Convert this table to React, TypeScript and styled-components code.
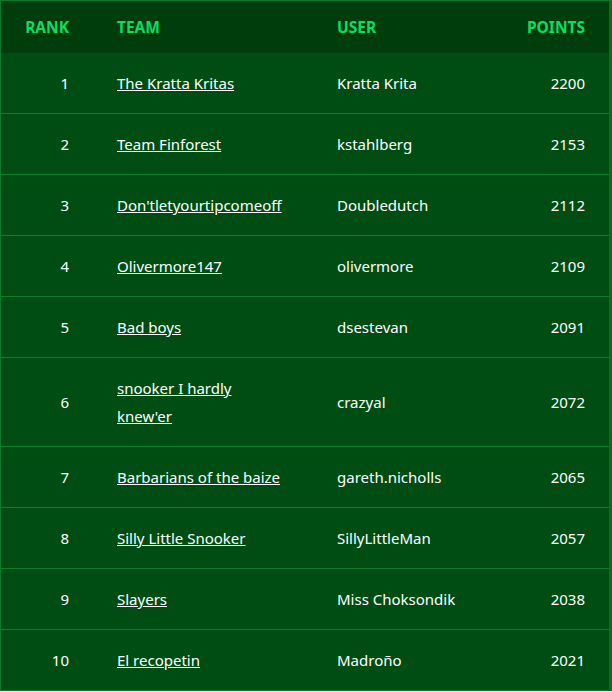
import React from "react";
import styled, { createGlobalStyle } from "styled-components";

const Global = createGlobalStyle`
  html, body { margin: 0; padding: 0; background: #ffffff; }
  body { font-family: "Noto Sans", "Open Sans", sans-serif; }
`;

const Frame = styled.div`
  width: 611px;
  border-top: 1px solid #0b7a2a;
  border-left: 1px solid #0b7a2a;
  background: #096d1f;
  overflow: hidden;
`;

const Table = styled.table`
  width: 608px;
  border-collapse: collapse;
  table-layout: fixed;
  font-size: 15px;
  line-height: 28px;
  color: #ffffff;
`;

const HeadRow = styled.tr`
  background: #003d0c;
`;

const Th = styled.th<{ $align?: "left" | "right" }>`
  padding: 12px 24px;
  text-align: ${(p) => p.$align || "left"};
  color: #0ddc62;
  font-weight: 700;
  font-size: 15.5px;
`;

const Row = styled.tr`
  background: #004d13;
  border-bottom: 1px solid #0b7d2b;
`;

const Td = styled.td<{ $align?: "left" | "right" }>`
  padding: 16px 24px;
  text-align: ${(p) => p.$align || "left"};
  vertical-align: middle;
`;

const TeamCell = styled(Td)`
  padding-right: 28px;
`;

const TeamLink = styled.a`
  color: #ffffff;
  text-decoration: underline;
`;

const data = [
  [1, "The Kratta Kritas", "Kratta Krita", 2200],
  [2, "Team Finforest", "kstahlberg", 2153],
  [3, "Don'tletyourtipcomeoff", "Doubledutch", 2112],
  [4, "Olivermore147", "olivermore", 2109],
  [5, "Bad boys", "dsestevan", 2091],
  [6, "snooker I hardly knew'er", "crazyal", 2072],
  [7, "Barbarians of the baize", "gareth.nicholls", 2065],
  [8, "Silly Little Snooker", "SillyLittleMan", 2057],
  [9, "Slayers", "Miss Choksondik", 2038],
  [10, "El recopetin", "Madroño", 2021],
] as const;

export default function App() {
  return (
    <>
      <Global />
      <Frame>
        <Table>
          <colgroup>
            <col style={{ width: 92 }} />
            <col style={{ width: 220 }} />
            <col style={{ width: 180 }} />
            <col style={{ width: 116 }} />
          </colgroup>
          <thead>
            <HeadRow>
              <Th $align="right">RANK</Th>
              <Th>TEAM</Th>
              <Th>USER</Th>
              <Th $align="right">POINTS</Th>
            </HeadRow>
          </thead>
          <tbody>
            {data.map(([rank, team, user, pts]) => (
              <Row key={rank}>
                <Td $align="right">{rank}</Td>
                <TeamCell>
                  <TeamLink href="#">{team}</TeamLink>
                </TeamCell>
                <Td>{user}</Td>
                <Td $align="right">{pts}</Td>
              </Row>
            ))}
          </tbody>
        </Table>
      </Frame>
    </>
  );
}
